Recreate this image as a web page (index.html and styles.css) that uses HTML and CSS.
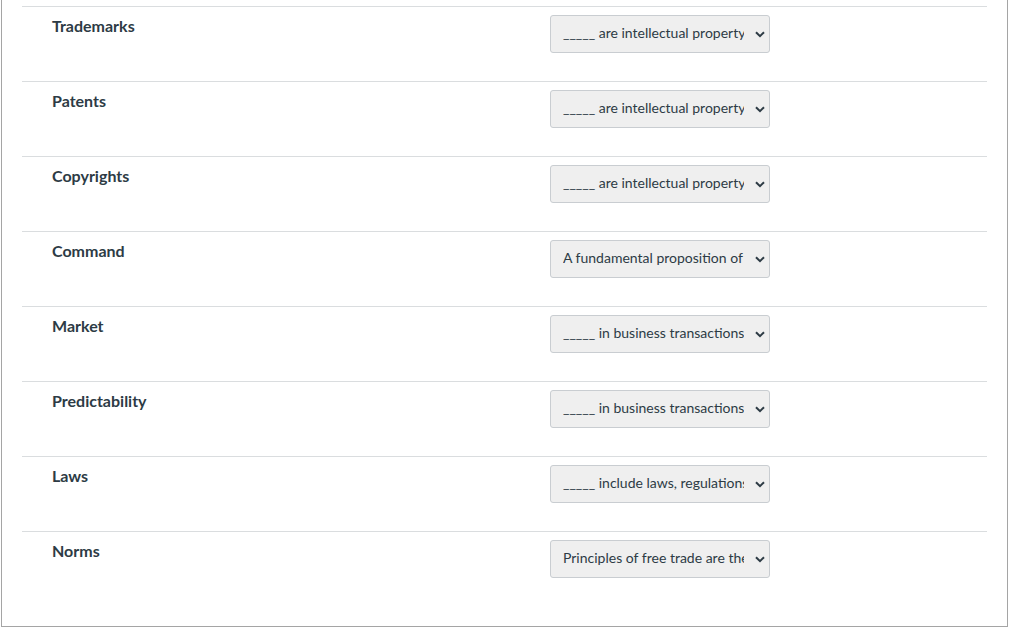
FILE: index.html
```html
<!DOCTYPE html>
<html>
<head>
<meta charset="utf-8">
<link rel="stylesheet" href="styles.css">
</head>
<body>
<div class="panel">
  <div class="row"><div class="label">Trademarks</div><div class="select"><span class="val">_____ are intellectual property rights</span><svg class="chev" viewBox="0 0 10 7"><path d="M1 1.2 L5 5.2 L9 1.2" /></svg></div></div>
  <div class="row"><div class="label">Patents</div><div class="select"><span class="val">_____ are intellectual property rights</span><svg class="chev" viewBox="0 0 10 7"><path d="M1 1.2 L5 5.2 L9 1.2" /></svg></div></div>
  <div class="row"><div class="label">Copyrights</div><div class="select"><span class="val">_____ are intellectual property rights</span><svg class="chev" viewBox="0 0 10 7"><path d="M1 1.2 L5 5.2 L9 1.2" /></svg></div></div>
  <div class="row"><div class="label">Command</div><div class="select"><span class="val">A fundamental proposition of economics</span><svg class="chev" viewBox="0 0 10 7"><path d="M1 1.2 L5 5.2 L9 1.2" /></svg></div></div>
  <div class="row"><div class="label">Market</div><div class="select"><span class="val">_____ in business transactions</span><svg class="chev" viewBox="0 0 10 7"><path d="M1 1.2 L5 5.2 L9 1.2" /></svg></div></div>
  <div class="row"><div class="label">Predictability</div><div class="select"><span class="val">_____ in business transactions</span><svg class="chev" viewBox="0 0 10 7"><path d="M1 1.2 L5 5.2 L9 1.2" /></svg></div></div>
  <div class="row"><div class="label">Laws</div><div class="select"><span class="val">_____ include laws, regulations</span><svg class="chev" viewBox="0 0 10 7"><path d="M1 1.2 L5 5.2 L9 1.2" /></svg></div></div>
  <div class="row"><div class="label">Norms</div><div class="select"><span class="val">Principles of free trade are the</span><svg class="chev" viewBox="0 0 10 7"><path d="M1 1.2 L5 5.2 L9 1.2" /></svg></div></div>
</div>
</body>
</html>
```
FILE: styles.css
```css
html, body {
  margin: 0;
  padding: 0;
  background: #fff;
}
body {
  font-family: Lato, "Liberation Sans", sans-serif;
  color: #2d3b45;
}
.panel {
  box-sizing: border-box;
  width: 1007px;
  margin-left: 1px;
  padding: 6px 20px 20px 20px;
  border: 1px solid #a5a5a5;
  border-top: none;
}
.row {
  display: flex;
  align-items: flex-start;
  height: 75px;
  box-sizing: border-box;
  border-top: 1px solid #dadddf;
  padding-top: 8px;
}
.label {
  width: 498px;
  padding-left: 30px;
  padding-top: 0;
  font-size: 16px;
  font-weight: 700;
  line-height: 22px;
}
.select {
  box-sizing: border-box;
  width: 220px;
  height: 38px;
  display: flex;
  align-items: center;
  background: #efefef;
  border: 1px solid #c9cdd1;
  border-radius: 3px;
  padding: 0 4px 2px 12px;
}
.val {
  flex: 0 0 180.5px;
  overflow: hidden;
  white-space: nowrap;
  font-size: 14px;
  line-height: 20px;
  color: #2d3b45;
}
.chev {
  width: 10px;
  height: 7px;
  margin-left: 11.5px;
  margin-top: 2px;
  fill: none;
  stroke: #2d3b45;
  stroke-width: 2;
}
```
